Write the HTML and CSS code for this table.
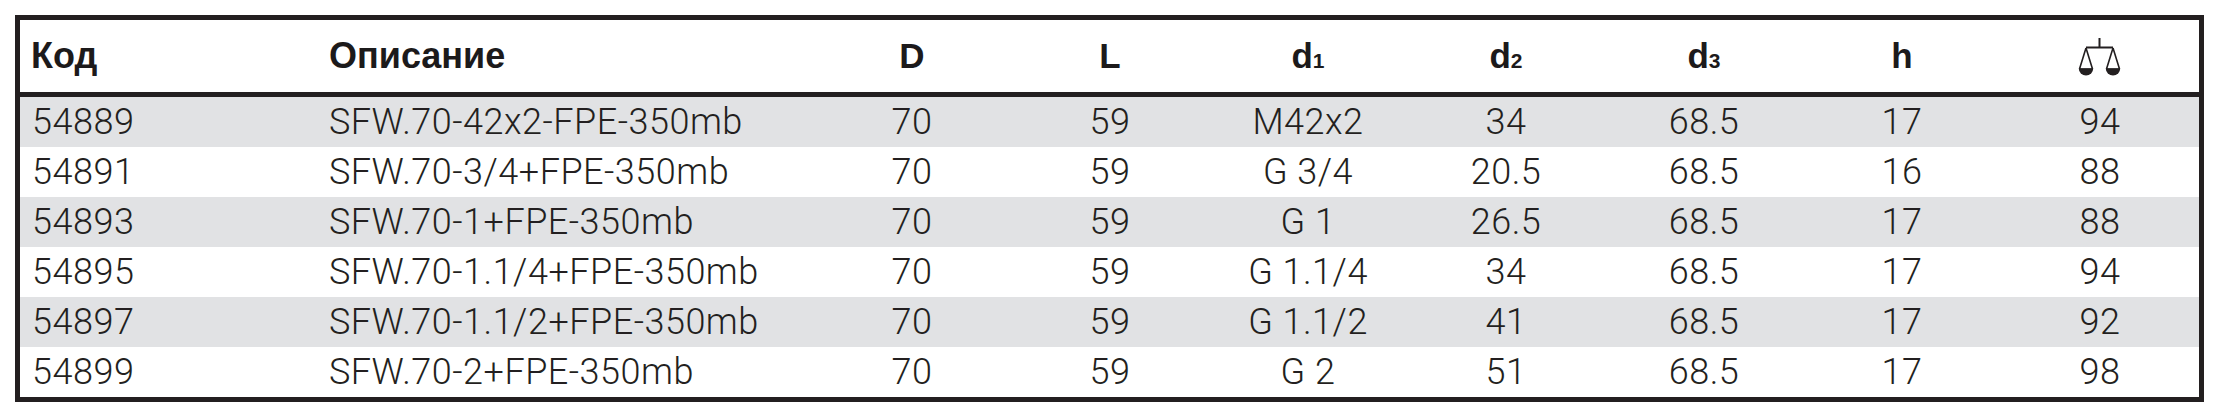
FILE: index.html
```html
<!DOCTYPE html>
<html lang="ru">
<head>
<meta charset="utf-8">
<title>SFW.70</title>
<link rel="stylesheet" href="styles.css">
</head>
<body>
<table class="spec">
  <colgroup>
    <col class="c-code"><col class="c-desc">
    <col class="c-num"><col class="c-num"><col class="c-num"><col class="c-num"><col class="c-num"><col class="c-num"><col class="c-num">
  </colgroup>
  <thead>
    <tr>
      <th class="h-text h-code">Код</th>
      <th class="h-text h-desc">Описание</th>
      <th class="h-sym">D</th>
      <th class="h-sym">L</th>
      <th class="h-sym">d<span class="idx">1</span></th>
      <th class="h-sym">d<span class="idx">2</span></th>
      <th class="h-sym">d<span class="idx">3</span></th>
      <th class="h-sym">h</th>
      <th class="h-sym h-icon">
        <svg class="scale" viewBox="0 0 44 38" width="44" height="38" aria-label="вес">
          <path d="M21.5 0 V9.5 M8 9.5 H35" fill="none" stroke="#231f20" stroke-width="2"/>
          <path d="M8 10 L1.5 31 M8 10 L14.5 31 M1 31 H15" fill="none" stroke="#231f20" stroke-width="1.6"/>
          <path d="M35 10 L28.5 31 M35 10 L41.5 31 M28 31 H42" fill="none" stroke="#231f20" stroke-width="1.6"/>
          <path d="M0.8 30.5 H15.2 A7.2 7 0 0 1 0.8 30.5 Z" fill="#231f20"/>
          <path d="M27.8 30.5 H42.2 A7.2 7 0 0 1 27.8 30.5 Z" fill="#231f20"/>
        </svg>
      </th>
    </tr>
  </thead>
  <tbody>
    <tr class="odd">
      <td class="t-code">54889</td><td class="t-desc">SFW.70-42x2-FPE-350mb</td>
      <td>70</td><td>59</td><td>M42x2</td><td>34</td><td>68.5</td><td>17</td><td>94</td>
    </tr>
    <tr>
      <td class="t-code">54891</td><td class="t-desc">SFW.70-3/4+FPE-350mb</td>
      <td>70</td><td>59</td><td>G 3/4</td><td>20.5</td><td>68.5</td><td>16</td><td>88</td>
    </tr>
    <tr class="odd">
      <td class="t-code">54893</td><td class="t-desc">SFW.70-1+FPE-350mb</td>
      <td>70</td><td>59</td><td>G 1</td><td>26.5</td><td>68.5</td><td>17</td><td>88</td>
    </tr>
    <tr>
      <td class="t-code">54895</td><td class="t-desc">SFW.70-1.1/4+FPE-350mb</td>
      <td>70</td><td>59</td><td>G 1.1/4</td><td>34</td><td>68.5</td><td>17</td><td>94</td>
    </tr>
    <tr class="odd">
      <td class="t-code">54897</td><td class="t-desc">SFW.70-1.1/2+FPE-350mb</td>
      <td>70</td><td>59</td><td>G 1.1/2</td><td>41</td><td>68.5</td><td>17</td><td>92</td>
    </tr>
    <tr>
      <td class="t-code">54899</td><td class="t-desc">SFW.70-2+FPE-350mb</td>
      <td>70</td><td>59</td><td>G 2</td><td>51</td><td>68.5</td><td>17</td><td>98</td>
    </tr>
  </tbody>
</table>
</body>
</html>
```
FILE: styles.css
```css
html, body {
  margin: 0;
  padding: 0;
  background: #ffffff;
}

body {
  padding: 15px;
  color: #231f20;
}

.spec {
  width: 2189px;
  table-layout: fixed;
  border-collapse: separate;
  border-spacing: 0;
  border: 5px solid #231f20;
}

.c-code { width: 294px; }
.c-desc { width: 499px; }
.c-num  { width: 198px; }

.spec th {
  height: 72px;
  padding: 0;
  border-bottom: 5px solid #231f20;
  text-align: center;
  vertical-align: middle;
  color: #1c1a1b;
}

.h-text {
  font-family: "Liberation Sans", Arial, sans-serif;
  font-weight: 700;
  font-size: 36px;
  text-align: left;
}

.spec th.h-code { text-align: left; padding-left: 11px; }
.spec th.h-desc { text-align: left; padding-left: 15px; }

.h-sym {
  font-family: "Liberation Sans Narrow", "Liberation Sans", Arial, sans-serif;
  font-weight: 700;
  font-size: 35px;
}

.idx {
  font-size: 21px;
}

.scale {
  display: block;
  margin: 2px auto 0;
}

.spec td {
  height: 50px;
  padding: 0;
  font-family: Roboto, "Liberation Sans", Arial, sans-serif;
  font-weight: 300;
  font-size: 36px;
  letter-spacing: 0.5px;
  line-height: 50px;
  text-align: center;
  vertical-align: middle;
  white-space: nowrap;
  color: #231f20;
}

.spec td.t-code { text-align: left; padding-left: 12px; }
.spec td.t-desc { text-align: left; padding-left: 15px; }

.spec tr.odd td {
  background: #e1e2e4;
}
```
